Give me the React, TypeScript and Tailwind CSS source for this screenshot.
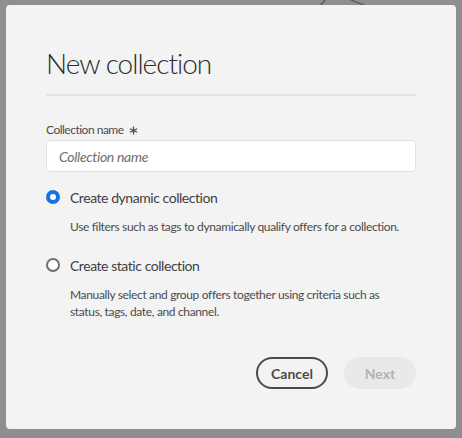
import React from 'react';

const font = { fontFamily: 'Lato, "Open Sans", sans-serif' };

function Radio( { checked }: { checked?: boolean } ) {
	return checked ? (
		<span className="w-[14px] h-[14px] rounded-full border-[4px] border-[#1473e6] bg-white shrink-0" />
	) : (
		<span className="w-[14px] h-[14px] rounded-full border-2 border-[#6e6e6e] bg-white shrink-0" />
	);
}

function Option( { checked, label, children }: { checked?: boolean; label: string; children: React.ReactNode } ) {
	return (
		<div>
			<div className="flex items-center gap-[10px] h-[32px]">
				<Radio checked={ checked } />
				<span className="text-[14px] tracking-[-0.45px] text-[#3f3f3f]">{ label }</span>
			</div>
			<p className="pl-[24px] mt-[5px] text-[12px] leading-[17px] tracking-[-0.35px] text-[#4b4b4b]">{ children }</p>
		</div>
	);
}

export default function App() {
	return (
		<div className="relative w-[462px] h-[438px] bg-[#8f8f8f] pt-[5px] pl-[6px] overflow-hidden" style={ font }>
			<svg className="absolute left-0 top-0" width="462" height="10" viewBox="0 0 462 10">
				<path d="M319 7 L326 -1" stroke="#555" strokeWidth="1.2" fill="none" />
				<path d="M349 -1 Q356 2 366 6" stroke="#555" strokeWidth="1.2" fill="none" />
			</svg>
			<div className="relative w-[450px] h-[424px] rounded-[4px] bg-[#f3f3f3] px-[40px] pt-[40px]">
				<h1 className="text-[28px] leading-[36px] font-light tracking-[-1px] text-[#2c2c2c]">New collection</h1>
				<div className="mt-[13px] h-[2px] bg-[#e5e5e5]" />
				<div className="mt-[26px] text-[12px] leading-[16px] tracking-[-0.5px] text-[#4b4b4b] flex items-center gap-[5px]">
					Collection name
					<svg width="9" height="9" viewBox="0 0 10 10" className="mt-[1px]">
						<path d="M5 0.5 V9.5 M1 3 L9 7 M1 7 L9 3" stroke="#4b4b4b" strokeWidth="1.4" />
					</svg>
				</div>
				<div className="mt-[2px] h-[32px] rounded-[4px] border border-[#e1e1e1] bg-white flex items-center px-[12px]">
					<span className="italic text-[14px] tracking-[-0.3px] text-[#6e6e6e]">Collection name</span>
				</div>
				<div className="mt-[9px] flex flex-col gap-[14px]">
					<Option checked label="Create dynamic collection">
						Use filters such as tags to dynamically qualify offers for a collection.
					</Option>
					<Option label="Create static collection">
						Manually select and group offers together using criteria such as
						<br />
						status, tags, date, and channel.
					</Option>
				</div>
				<div className="absolute right-[40px] top-[352px] flex gap-[16px]">
					<button className="w-[72px] h-[32px] rounded-full border-2 border-[#4b4b4b] text-[14px] font-bold text-[#4b4b4b]">
						Cancel
					</button>
					<button className="w-[72px] h-[32px] rounded-full bg-[#e9e9e9] text-[14px] font-bold text-[#b3b3b3]">
						Next
					</button>
				</div>
			</div>
		</div>
	);
}
